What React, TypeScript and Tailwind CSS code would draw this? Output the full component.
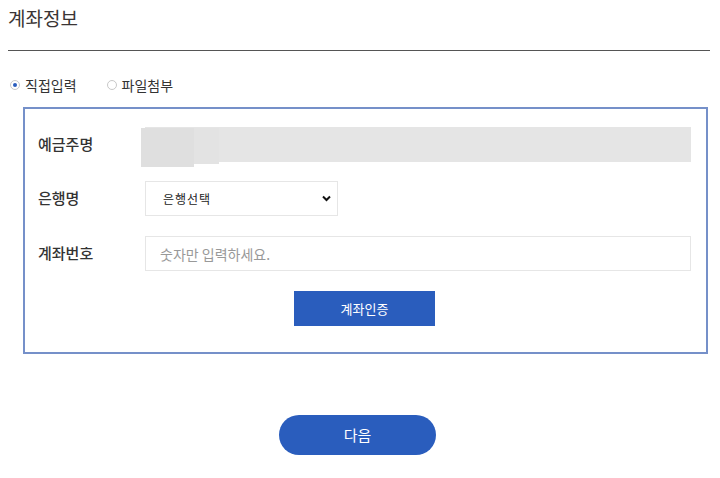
import React, { useState } from 'react';

const font = { fontFamily: '"Noto Sans CJK KR", "Noto Sans", sans-serif' };

const Radio: React.FC<{ checked: boolean; label: string; onClick: () => void }> = ({ checked, label, onClick }) => (
    <label onClick={onClick} className="flex items-center gap-[5px] cursor-pointer">
        <span className="w-[10px] h-[10px] rounded-full border border-[#c8c8c8] bg-white flex items-center justify-center">
            {checked && <span className="w-[4px] h-[4px] rounded-full bg-[#2a5dbd]" />}
        </span>
        <span className="text-[14px] text-[#333]">{label}</span>
    </label>
);

export default function App() {
    const [mode, setMode] = useState<'direct' | 'file'>('direct');
    const [bank, setBank] = useState('');
    const [account, setAccount] = useState('');

    return (
        <div className="w-[720px] h-[478px] bg-white pl-[8px] pr-[10px]" style={font}>
            <h1 className="pt-[5px] text-[19px] leading-[26px] text-[#3a3535] font-normal">계좌정보</h1>
            <div className="mt-[19px] h-px bg-[#555]" />

            {/* Input type */}
            <div className="mt-[24px] flex items-center gap-[30px] pl-[2px] h-[20px]">
                <Radio checked={mode === 'direct'} label="직접입력" onClick={() => setMode('direct')} />
                <Radio checked={mode === 'file'} label="파일첨부" onClick={() => setMode('file')} />
            </div>

            {/* Account form */}
            <div className="mt-[12px] ml-[15px] w-[685px] border-2 border-[#7590c9] pt-[18px] pb-[26px] pl-[13px] pr-[15px]">
                <div className="flex items-center h-[35px]">
                    <span className="w-[107px] text-[15px] font-medium text-[#333]">예금주명</span>
                    <div className="relative flex-1 h-[35px] bg-[#e5e5e5]">
                        <div className="absolute left-[-4px] top-[1px] w-[53px] h-[39px] bg-[#dfdfdf]" />
                        <div className="absolute left-[49px] top-[1px] w-[25px] h-[36px] bg-[#e3e3e3]" />
                    </div>
                </div>

                <div className="mt-[19px] flex items-center h-[35px]">
                    <span className="w-[107px] text-[15px] font-medium text-[#333]">은행명</span>
                    <div className="relative w-[193px] h-[35px]">
                        <select
                            value={bank}
                            onChange={e => setBank(e.target.value)}
                            className="appearance-none w-full h-full border border-[#e6e6e6] bg-white pl-[17px] text-[12px] text-[#222] tracking-[1px] outline-none"
                        >
                            <option value="">은행선택</option>
                            <option value="kb">국민은행</option>
                            <option value="shinhan">신한은행</option>
                        </select>
                        <svg className="absolute right-[7px] top-[14px] pointer-events-none" width="9" height="7" viewBox="0 0 9 7">
                            <path d="M1 1.5 L4.5 5 L8 1.5" fill="none" stroke="#111" strokeWidth="2" />
                        </svg>
                    </div>
                </div>

                <div className="mt-[20px] flex items-center h-[35px]">
                    <span className="w-[107px] text-[15px] font-medium text-[#333]">계좌번호</span>
                    <input
                        value={account}
                        onChange={e => setAccount(e.target.value.replace(/\D/g, ''))}
                        placeholder="숫자만 입력하세요."
                        className="flex-1 h-[35px] border border-[#e6e6e6] px-[14px] text-[14px] text-[#333] placeholder:text-[#999] outline-none"
                    />
                </div>

                <div className="mt-[20px] flex justify-center">
                    <button className="w-[141px] h-[35px] bg-[#2a5dbd] text-white text-[13px]">계좌인증</button>
                </div>
            </div>

            <div className="mt-[61px] flex justify-center pr-[3px]">
                <button className="w-[157px] h-[40px] rounded-full bg-[#2a5dbd] text-white text-[15px]">다음</button>
            </div>
        </div>
    );
}
